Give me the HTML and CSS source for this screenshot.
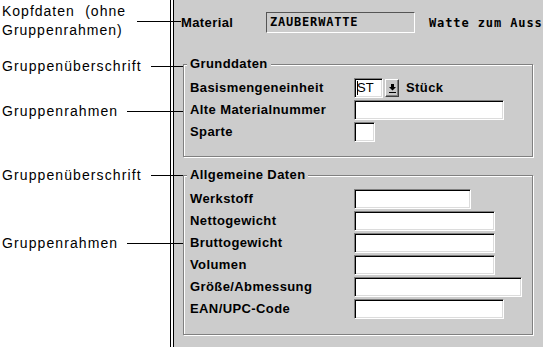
FILE: index.html
```html
<!DOCTYPE html>
<html lang="de">
<head>
<meta charset="utf-8">
<title>Material</title>
<link rel="stylesheet" href="styles.css">
</head>
<body>
<div class="page">
  <div class="callout callout-head to-label">
    <span class="note note-wide">Kopfdaten (ohne Gruppenrahmen)</span>
    <span class="leader leader-head"></span>
  </div>
  <div class="callout callout-t1 to-frame">
    <span class="note">Gruppenüberschrift</span>
    <span class="leader"></span>
  </div>
  <div class="callout callout-r1 to-frame">
    <span class="note">Gruppenrahmen</span>
    <span class="leader"></span>
  </div>
  <div class="callout callout-t2 to-frame">
    <span class="note">Gruppenüberschrift</span>
    <span class="leader"></span>
  </div>
  <div class="callout callout-r2 to-frame">
    <span class="note">Gruppenrahmen</span>
    <span class="leader"></span>
  </div>

  <div class="window">
    <div class="window-inner">
      <div class="header">
        <span class="label header-label">Material</span>
        <span class="display-field">ZAUBERWATTE</span>
        <span class="mono-text">Watte zum Auss</span>
      </div>

      <fieldset class="group group-first">
        <legend class="label group-title">Grunddaten</legend>
        <div class="rows">
          <span class="label">Basismengeneinheit</span>
          <div class="combo">
            <span class="field field-unit"><span class="cursor"></span>ST</span>
            <span class="drop-btn">
              <svg width="7" height="9" viewBox="0 0 7 9"><path d="M2 0h3v3h2L3.5 6.5 0 3h2z" fill="#000"/><rect x="0" y="8" width="7" height="1" fill="#000"/></svg>
            </span>
            <span class="label unit-text">Stück</span>
          </div>
          <span class="label">Alte Materialnummer</span>
          <span class="field w150"></span>
          <span class="label">Sparte</span>
          <span class="field w21"></span>
        </div>
      </fieldset>

      <fieldset class="group group-second">
        <legend class="label group-title">Allgemeine Daten</legend>
        <div class="rows">
          <span class="label">Werkstoff</span>
          <span class="field w117"></span>
          <span class="label">Nettogewicht</span>
          <span class="field w141"></span>
          <span class="label">Bruttogewicht</span>
          <span class="field w141"></span>
          <span class="label">Volumen</span>
          <span class="field w141"></span>
          <span class="label">Größe/Abmessung</span>
          <span class="field w168"></span>
          <span class="label">EAN/UPC-Code</span>
          <span class="field w150"></span>
        </div>
      </fieldset>
    </div>
  </div>
</div>
</body>
</html>
```

FILE: styles.css
```css
html, body {
  margin: 0;
  padding: 0;
  background: #fff;
}

body {
  font-family: "Liberation Sans", Arial, sans-serif;
  color: #000;
}

.page {
  position: relative;
  display: flex;
  height: 347px;
  width: 543px;
  overflow: hidden;
}

/* ---------- callouts ---------- */
.callout {
  position: absolute;
  left: 2px;
  display: flex;
  align-items: center;
  z-index: 2;
}

.to-label { width: 179px; }
.to-frame { width: 181px; }

.callout-head { top: 2px; }
.callout-t1 { top: 58px; }
.callout-r1 { top: 103px; }
.callout-t2 { top: 167px; }
.callout-r2 { top: 235px; }

.note {
  font-size: 14px;
  line-height: 16px;
  letter-spacing: 1.1px;
  white-space: nowrap;
}

.note-wide {
  width: 124px;
  white-space: normal;
  text-align: justify;
  line-height: 19px;
  letter-spacing: 1px;
}

.leader {
  flex: 1;
  height: 1px;
  background: #000;
  margin-left: 9px;
}

.leader-head {
  margin-left: 11px;
}

/* ---------- window ---------- */
.window {
  margin-left: 170px;
  flex: 1;
  border-left: 1px solid #000;
  padding-left: 2px;
  background: #fff;
}

.window-inner {
  height: 100%;
  border-left: 1px solid #000;
  background: #cccccc;
  padding-top: 12px;
  box-sizing: border-box;
}

.label {
  font-size: 13px;
  font-weight: bold;
  line-height: 16px;
  letter-spacing: 0.4px;
  white-space: nowrap;
}

.header {
  display: flex;
  align-items: center;
  height: 21px;
  padding-left: 7px;
}

.header-label {
  width: 85px;
}

.display-field {
  box-sizing: border-box;
  width: 149px;
  height: 21px;
  border: 1px solid;
  border-color: #555 #fff #fff #555;
  font-family: "DejaVu Sans Mono", monospace;
  font-weight: bold;
  font-size: 12px;
  letter-spacing: 0.8px;
  line-height: 19px;
  padding-left: 3px;
}

.mono-text {
  margin-left: 14px;
  font-family: "DejaVu Sans Mono", monospace;
  font-weight: bold;
  font-size: 12px;
  letter-spacing: 0.9px;
  white-space: nowrap;
}

/* ---------- groups ---------- */
.group {
  margin: 0 10px 0 9px;
  padding: 6px 6px 14px 6px;
  border: 1px solid #808080;
  box-shadow: 1px 1px 0 #fff, inset 1px 1px 0 #fff;
  min-width: 0;
}

.group-first {
  margin-top: 23px;
}

.group-second {
  margin-top: 10px;
  padding-bottom: 15px;
}

.group-title {
  padding: 0 3px;
  margin-left: -3px;
  background: #cccccc;
}

.rows {
  display: grid;
  grid-template-columns: 164px 1fr;
  grid-auto-rows: 20px;
  row-gap: 2px;
  align-items: center;
  justify-items: start;
}

.field {
  display: block;
  box-sizing: border-box;
  height: 20px;
  background: #fff;
  border: 1px solid;
  border-color: #808080 #fff #fff #808080;
  box-shadow: inset 1px 1px 0 #000, inset -1px -1px 0 #dcdcdc;
}

.w21 { width: 21px; }
.w117 { width: 117px; }
.w141 { width: 141px; }
.w150 { width: 150px; }
.w168 { width: 168px; }

.combo {
  display: flex;
  align-items: center;
  height: 20px;
}

.field-unit {
  display: flex;
  align-items: center;
  width: 29px;
  font-size: 13px;
  padding-left: 2px;
  line-height: 16px;
}

.cursor {
  display: block;
  width: 1px;
  height: 14px;
  background: #000;
  margin-right: -1px;
}

.drop-btn {
  box-sizing: border-box;
  display: flex;
  align-items: center;
  justify-content: center;
  width: 14px;
  height: 18px;
  margin-left: 2px;
  background: #c8c8c8;
  border: 1px solid;
  border-color: #fff #404040 #404040 #fff;
  box-shadow: inset -1px -1px 0 #808080;
}

.unit-text {
  margin-left: 7px;
}
```
